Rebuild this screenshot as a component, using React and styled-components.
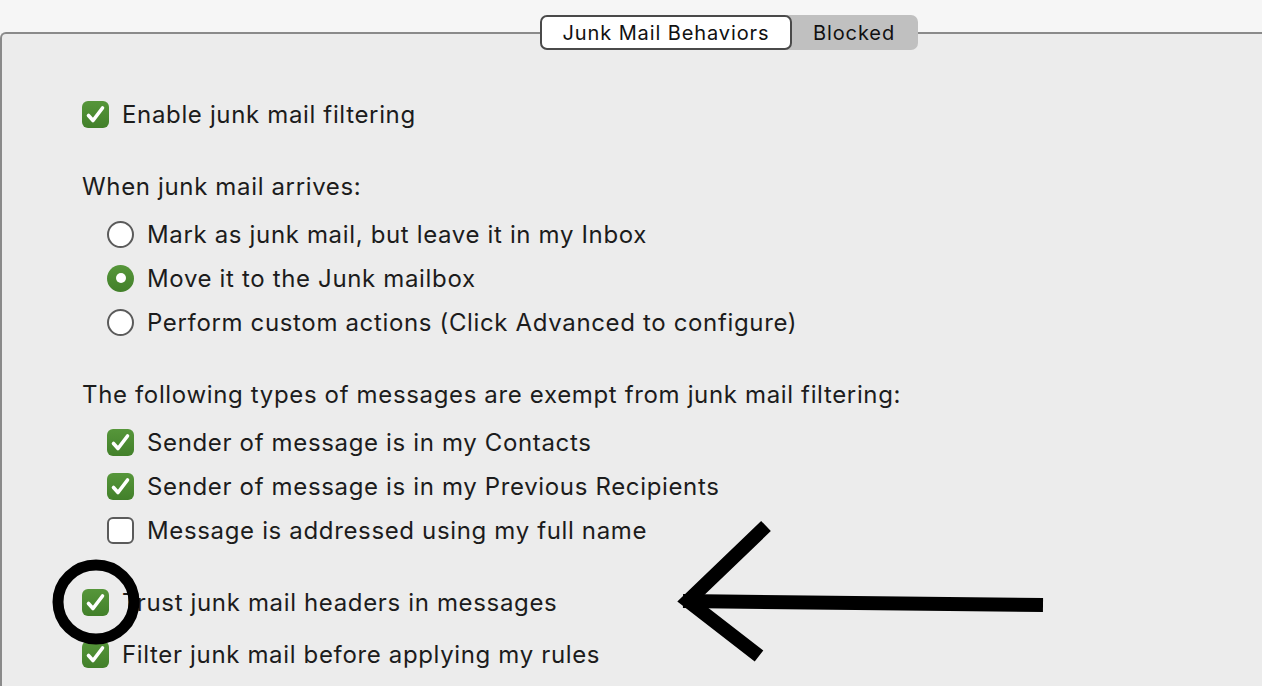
import React from "react";
import styled, { createGlobalStyle } from "styled-components";

const GlobalStyle = createGlobalStyle`
  html, body {
    margin: 0;
    padding: 0;
    background: #f6f6f6;
  }
  body {
    font-family: Inter, "Noto Sans", "Liberation Sans", sans-serif;
    color: #1c1c1c;
    overflow: hidden;
  }
`;

const Page = styled.div`
  position: relative;
  width: 1262px;
  height: 686px;
  overflow: hidden;
`;

const TabBar = styled.div`
  position: relative;
  z-index: 2;
  display: flex;
  padding: 15px 0 0 540px;
  height: 35px;
`;

const Tab = styled.div`
  box-sizing: border-box;
  height: 35px;
  display: flex;
  align-items: center;
  justify-content: center;
  font-size: 20px;
  letter-spacing: 0.9px;
  color: #111;
  width: ${(p) => p.$width}px;
  background: ${(p) => (p.$active ? "#ffffff" : "#c0c0c0")};
  border: ${(p) => (p.$active ? "2px solid #4a4a4a" : "none")};
  border-radius: ${(p) => (p.$active ? "7px" : "0 7px 7px 0")};
  margin-left: ${(p) => (p.$active ? "0" : "-6px")};
  padding-left: ${(p) => (p.$active ? "0" : "4px")};
  position: relative;
  z-index: ${(p) => (p.$active ? 2 : 1)};
`;

const Panel = styled.div`
  margin-top: -18px;
  min-height: 700px;
  background: #ececec;
  border-top: 2px solid #8a8a8a;
  border-left: 2px solid #8a8a8a;
  border-top-left-radius: 6px;
  padding: 58px 0 0 80px;
`;

const Group = styled.div`
  display: flex;
  flex-direction: column;
  gap: ${(p) => p.$gap || 0}px;
  margin-top: ${(p) => p.$top || 0}px;
`;

const List = styled.div`
  display: flex;
  flex-direction: column;
  padding-left: ${(p) => p.$indent || 0}px;
`;

const Row = styled.div`
  display: flex;
  align-items: center;
  gap: 13px;
  height: 44px;
  font-size: 24px;
  letter-spacing: 0.65px;
`;

const Heading = styled.div`
  height: 44px;
  display: flex;
  align-items: center;
  font-size: 24px;
  letter-spacing: 0.65px;
`;

const Box = styled.span`
  box-sizing: border-box;
  width: 27px;
  height: 27px;
  flex: none;
  border-radius: 6px;
  display: flex;
  align-items: center;
  justify-content: center;
  background: ${(p) =>
    p.$checked ? "linear-gradient(#56963a, #42802a)" : "#ffffff"};
  border: ${(p) => (p.$checked ? "none" : "2px solid #5b5b5b")};
`;

const Radio = styled.span`
  box-sizing: border-box;
  width: 27px;
  height: 27px;
  flex: none;
  border-radius: 50%;
  display: flex;
  align-items: center;
  justify-content: center;
  background: ${(p) =>
    p.$checked ? "linear-gradient(#56963a, #42802a)" : "#ffffff"};
  border: ${(p) => (p.$checked ? "none" : "2px solid #5b5b5b")};

  &::after {
    content: "";
    display: ${(p) => (p.$checked ? "block" : "none")};
    width: 10px;
    height: 10px;
    border-radius: 50%;
    background: #fff;
  }
`;

const Overlay = styled.svg`
  position: absolute;
  left: 0;
  top: 0;
  pointer-events: none;
  z-index: 5;
`;

function Check({ checked }) {
  return (
    <Box $checked={checked}>
      {checked && (
        <svg width="27" height="27" viewBox="0 0 27 27">
          <path
            d="M6.5 14.5 L11 19.5 L20.5 7"
            fill="none"
            stroke="#fff"
            strokeWidth="3.6"
            strokeLinecap="round"
            strokeLinejoin="round"
          />
        </svg>
      )}
    </Box>
  );
}

function CheckRow({ checked, children }) {
  return (
    <Row>
      <Check checked={checked} />
      <span>{children}</span>
    </Row>
  );
}

function RadioRow({ checked, children }) {
  return (
    <Row>
      <Radio $checked={checked} />
      <span>{children}</span>
    </Row>
  );
}

export default function App() {
  return (
    <Page>
      <GlobalStyle />
      <TabBar>
        <Tab $active $width={252}>
          Junk Mail Behaviors
        </Tab>
        <Tab $width={132}>Blocked</Tab>
      </TabBar>
      <Panel>
        <CheckRow checked>Enable junk mail filtering</CheckRow>

        <Group $top={28} $gap={4}>
          <Heading>When junk mail arrives:</Heading>
          <List $indent={25}>
            <RadioRow>Mark as junk mail, but leave it in my Inbox</RadioRow>
            <RadioRow checked>Move it to the Junk mailbox</RadioRow>
            <RadioRow>Perform custom actions (Click Advanced to configure)</RadioRow>
          </List>
        </Group>

        <Group $top={28} $gap={4}>
          <Heading>
            The following types of messages are exempt from junk mail filtering:
          </Heading>
          <List $indent={25}>
            <CheckRow checked>Sender of message is in my Contacts</CheckRow>
            <CheckRow checked>Sender of message is in my Previous Recipients</CheckRow>
            <CheckRow>Message is addressed using my full name</CheckRow>
          </List>
        </Group>

        <Group $top={28} $gap={8}>
          <CheckRow checked>Trust junk mail headers in messages</CheckRow>
          <CheckRow checked>Filter junk mail before applying my rules</CheckRow>
        </Group>
      </Panel>

      <Overlay width="1262" height="686" viewBox="0 0 1262 686">
        <ellipse
          cx="96"
          cy="602"
          rx="38"
          ry="37"
          fill="none"
          stroke="#000"
          strokeWidth="11"
        />
        <path d="M683 601 L1043 605" stroke="#000" strokeWidth="14" fill="none" />
        <path
          d="M766 526 L688 601 L759 656"
          stroke="#000"
          strokeWidth="14"
          fill="none"
          strokeLinejoin="miter"
        />
      </Overlay>
    </Page>
  );
}
